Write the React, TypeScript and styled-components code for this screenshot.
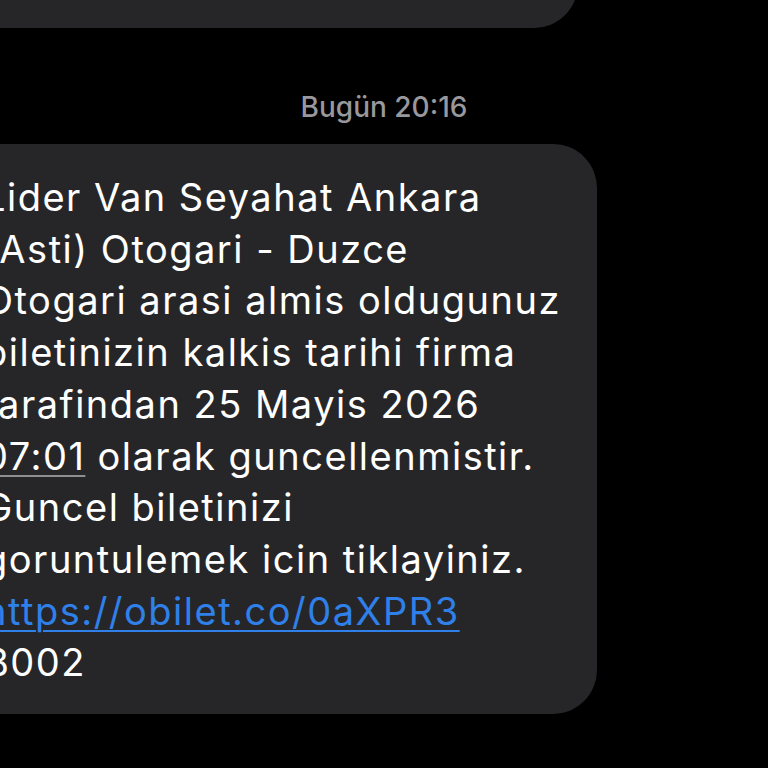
import React from 'react';
import styled, { createGlobalStyle } from 'styled-components';

const GlobalStyle = createGlobalStyle`
  html, body {
    margin: 0;
    padding: 0;
    background: #000;
    overflow: hidden;
  }
  body {
    font-family: Inter, "Noto Sans", "Liberation Sans", sans-serif;
    -webkit-font-smoothing: antialiased;
  }
`;

const Screen = styled.div`
  width: 768px;
  height: 768px;
  background: #000;
  display: flex;
  flex-direction: column;
  overflow: hidden;
`;

const PrevBubble = styled.div`
  width: 660px;
  height: 100px;
  margin-top: -72px;
  margin-left: -82px;
  background: #262629;
  border-radius: 44px;
  flex-shrink: 0;
`;

const Stamp = styled.div`
  margin-top: 62px;
  text-align: center;
  color: #98989d;
  font-size: 28px;
  font-weight: 500;
  line-height: 34px;
`;

const Bubble = styled.div`
  margin-top: 20px;
  margin-left: -60px;
  width: 657px;
  box-sizing: border-box;
  padding: 28px 0 25px 44px;
  background: #262629;
  border-radius: 44px;
  flex-shrink: 0;
`;

const Line = styled.div`
  color: #fff;
  font-size: 38px;
  line-height: 51.7px;
  white-space: nowrap;
  letter-spacing: 1.5px;
`;

const Time = styled.span`
  text-decoration: underline;
  text-decoration-color: #8e8e93;
  text-decoration-thickness: 2px;
  text-underline-offset: 5px;
`;

const Link = styled.a`
  color: #2f80e8;
  text-decoration: underline;
  text-decoration-thickness: 2px;
  text-underline-offset: 5px;
`;

const lines = [
  'Lider Van Seyahat Ankara',
  '(Asti) Otogari - Duzce',
  'Otogari arasi almis oldugunuz',
  'biletinizin kalkis tarihi firma',
  'tarafindan 25 Mayis 2026',
];

const App: React.FC = () => (
  <>
    <GlobalStyle />
    <Screen>
      <PrevBubble />
      <Stamp>Bugün 20:16</Stamp>
      <Bubble>
        {lines.map((l) => (
          <Line key={l}>{l}</Line>
        ))}
        <Line>
          <Time>07:01</Time> olarak guncellenmistir.
        </Line>
        <Line>Guncel biletinizi</Line>
        <Line>goruntulemek icin tiklayiniz.</Line>
        <Line>
          <Link href="#">https://obilet.co/0aXPR3</Link>
        </Line>
        <Line>B002</Line>
      </Bubble>
    </Screen>
  </>
);

export default App;
